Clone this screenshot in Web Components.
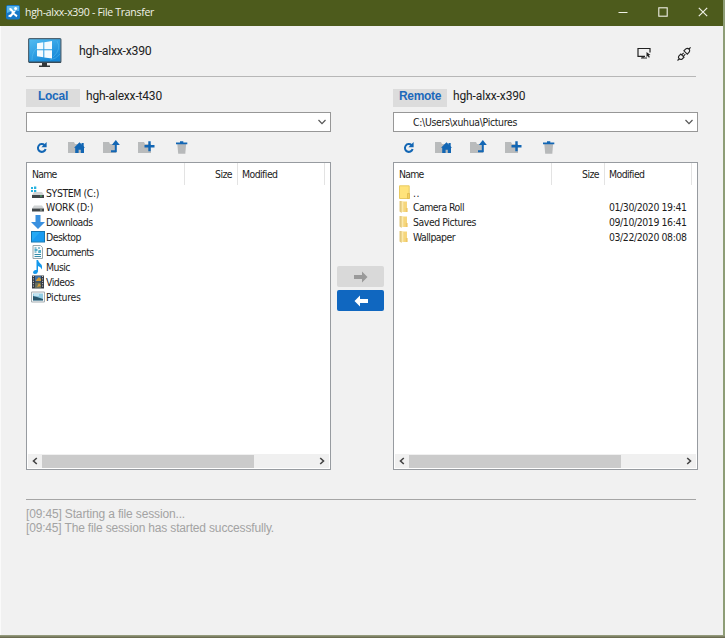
<!DOCTYPE html>
<html lang="en"><head><meta charset="utf-8"><title>File Transfer</title>
<style>html,body{margin:0;width:725px;height:638px;overflow:hidden}body{background:#8c9672;font-family:"Liberation Sans",Arial,sans-serif}</style></head>
<body><transfer-window></transfer-window>
<script>
const define=(name,cls)=>customElements.define(name,cls);
const icons={
app:[14,15,`<rect width="14" height="14.5" rx="2" fill="#1478c8"/><path d="M1 1h12v5Q7 5 1 8z" fill="#58b4ea"/><path d="M3.3 3.2q2-1 3.2 1.6l1 1.2 2.6-.4L8.3 8l3.2 2.2-1 2-3.2-2.6-2.4 2.6-2.7-.7.4-1.3L5.2 9l.6-2.2L3.5 5z" fill="#fff"/><circle cx="9.6" cy="3.6" r="1.5" fill="#fff"/>`],
min:[10,10,`<path d="M.5 5.5h9" stroke="#eff0e5"/>`],
max:[10,10,`<rect x=".8" y=".8" width="8.4" height="8.4" fill="none" stroke="#eff0e5" stroke-width="1.1"/>`],
close:[10,10,`<path d="M.8.8l8.4 8.4M9.2.8L.8 9.2" stroke="#eff0e5" stroke-width="1.2"/>`],
monitor:[34,30,`<defs><linearGradient id="g" x2=".6" y2="1"><stop stop-color="#54bdf2"/><stop offset="1" stop-color="#1588d8"/></linearGradient></defs><rect x=".6" y=".6" width="32.3" height="23.8" rx="1" fill="url(#g)" stroke="#4e6371" stroke-width="1.2"/><path d="M4 22q0-8 5-12M29 3q5 8-4 16M22 22q6-1 10-6" fill="none" stroke="#67c7f5" opacity=".4"/><path d="M9 5.3l6.3-1v7H9zM16.3 4.2L24 3v8.3h-7.7zM9 12.3h6.3v7L9 18.2zM16.3 12.3H24v8.2l-7.7-1.1z" fill="#f4fbff"/><path d="M14 25h5v2.5h3V29H11v-1.5h3z" fill="#34383a"/><path d="M1 24.2h32" stroke="#30424d"/>`],
screen:[14,12,`<path d="M8 9.3H1V1.5h12v4M6 9v2M4 11h6" fill="none" stroke="#222" stroke-width="1.2"/><path d="M9.5 5l4 3-1.800.3 1.2 1.8-1 .7-1.200-1.900-1.200 1z" fill="#222"/>`],
plug:[14,14,`<g fill="none" stroke="#222" stroke-width="1.1"><path d="M2 8.800l1.800-1.800 3.200 3.200L5.200 12Q3.600 13 2.200 11.700T2 8.800zM8.800 1.900Q10.500.8 11.900 2t.2 3.200L10.300 7.100 6.900 3.800zM.5 13.500L2.200 12M12 2L13.600.4M4.700 7.900l2-2.100M6.300 9.300l2-2.100"/></g>`],
refresh:[12,13,`<path d="M8.600 4.200A3.900 3.900 0 1 0 9.600 8" fill="none" stroke="#1266b4" stroke-width="2"/><path d="M10.600 1v5.200H5.400z" fill="#1266b4"/>`],
home:[18,13,`<path d="M0 1h6l1 2h6v9H0z" fill="#b9bbbc"/><path d="M11.500 1.200L17 6.800h-1V12h-3.200V8.800h-2.200V12H7.200V6.800H6z" fill="#1266b4"/><path d="M13.500 2h2.200v4h-2.200z" fill="#1266b4"/>`],
up:[18,14,`<path d="M0 2h6l1 2h6v9H0z" fill="#b9bbbc"/><path d="M8 11.200h4.800V4" fill="none" stroke="#1266b4" stroke-width="2"/><path d="M8.800 5L12.800 0l4 5z" fill="#1266b4"/>`],
add:[18,13,`<path d="M0 1h6l1 2h6v9H0z" fill="#b9bbbc"/><path d="M6.500 5.300h10M11.500.3v10" stroke="#1266b4" stroke-width="2.400"/>`],
trash:[12,13,`<path d="M1.300 3h8.800l-.8 9.700H2.200z" fill="#b7b9ba"/><path d="M0 1.400h4V.3h3.300v1.100h4v1.800H0z" fill="#1266b4"/>`],
chev:[8,6,`<path d="M.5 1L4 4.600 7.500 1" fill="none" stroke="#555" stroke-width="1.2"/>`],
sl:[6,8,`<path d="M4.800 1L1.500 4l3.300 3" fill="none" stroke="#444" stroke-width="1.6"/>`],
sr:[6,8,`<path d="M1.200 1l3.300 3-3.300 3" fill="none" stroke="#444" stroke-width="1.6"/>`],
right:[14,12,`<path d="M0 4h8V.5L13.500 6 8 11.500V8H0z" fill="#9a9a9a"/>`],
left:[14,12,`<path d="M14 4H6V.5L.5 6 6 11.500V8h8z" fill="#fff"/>`],
sys:[14,14,`<path d="M0 1h2v2H0zM3 .6h2.300V3H3zM0 4h2v2H0zM3 4h2.300v2.300H3z" fill="#27b3df"/><path d="M3 6h8l2 3H1z" fill="#d0d3d4"/><path d="M1 9h12v3H1z" fill="#414648"/><path d="M9 10h2" stroke="#50bd70"/>`],
drive:[14,14,`<path d="M3 5.500h8l2 3H1z" fill="#d0d3d4"/><path d="M1 8.500h12v3H1z" fill="#414648"/><path d="M9 10h2" stroke="#a4b6aa"/>`],
down:[14,14,`<path d="M4.500 0h5v7H14l-7 7-7-7h4.500z" fill="#3990df"/>`],
desk:[14,14,`<rect x=".5" y="1.5" width="13" height="10.5" fill="#24a9f4" stroke="#1474b1"/><path d="M1 11l8-9h4v9z" fill="#199af0"/>`],
doc:[14,14,`<path d="M2 .5h7.500l2 2v11H2z" fill="#f7fafb" stroke="#9aa7ac"/><path d="M3.500 3h2M7 3h2M3.500 7h2M7 7h3M3.500 9.500h6.500M3.500 11.500h6.500" stroke="#328aa8"/><path d="M3.500 4h3v2h-3zM7.500 5h2.500v3H7.500z" fill="#52aeca"/>`],
music:[14,14,`<path d="M5.500 0H7q.7 2.600 2.700 4t1 5.500Q10 6.500 7 6v5.500Q6.500 14 4 14q-2.500-.2-1.800-2.300T5.500 10z" fill="#1498eb"/>`],
video:[14,14,`<path d="M1 .5h12v13H1z" fill="#343a43"/><path d="M4 1h6v5.500H4z" fill="#3d70a5"/><path d="M4 7.500h6V13H4z" fill="#68705d"/><path d="M5 5l3-3 2 2v2H5zM6 12l2-4 2 3z" fill="#d29a38"/><path d="M2.400 1v12M11.600 1v12" stroke="#ddd" stroke-dasharray="1 1.4"/>`],
pic:[14,14,`<path d="M.5 2h13v10H.5z" fill="#f6f9fa" stroke="#a4adb2"/><path d="M2 3.500h10v7H2z" fill="#92cce4"/><path d="M2 6l4 1 6 2v1.500H2z" fill="#27576e"/><path d="M3 5h5" stroke="#f0faff"/>`],
folder:[14,14,`<path d="M3 1.500h6V12H3z" fill="#f6d67c"/><path d="M1.500 1h2.200v12l-2.200-1.500z" fill="#e3c97f"/><path d="M3.700 1.500h1.600V12H3.700z" fill="#fbe9ae"/><path d="M7.800 8h1.800v4H7.800z" fill="#eec765"/>`],
parent:[14,15,`<path d="M1.500 .8h9.700v12.700H1.500z" fill="#ffe37b" stroke="#e8ca63"/><path d="M9.500 8.500h2v5h-2z" fill="#f4cf5e" stroke="#ddb74b" stroke-width=".7"/>`]
};
define('ui-icon',class extends HTMLElement{connectedCallback(){const [w,h,p]=icons[this.getAttribute('name')];this.attachShadow({mode:'open'}).innerHTML=`<style>:host{display:block;flex:none;width:${w}px;height:${h}px}svg{display:block}</style><svg width="${w}" height="${h}" viewBox="0 0 ${w} ${h}">${p}</svg>`}});
/* One-line label whose tracking is tuned so the text spans the width in "w". */
define('ui-text',class extends HTMLElement{connectedCallback(){
 const t=this.getAttribute('t');
 this.attachShadow({mode:'open'}).innerHTML=`<style>:host{display:block;flex:none;white-space:pre}span{display:inline-block}</style><span>${t}</span>`;
 const s=this.shadowRoot.querySelector('span'),w=+this.getAttribute('w');
 if(w){const n=s.getBoundingClientRect().width;if(n)s.style.letterSpacing=((w-n)/t.length)+'px'}
}});
define('transfer-button',class extends HTMLElement{connectedCallback(){const p=this.hasAttribute('primary');this.attachShadow({mode:'open'}).innerHTML=`<style>:host{display:flex;align-items:center;justify-content:center;width:47px;height:21px;border-radius:2px;background:${p?'#1067c0':'#d9d9d9'}}</style><slot></slot>`}});
define('file-row',class extends HTMLElement{connectedCallback(){const g=k=>this.getAttribute(k);this.attachShadow({mode:'open'}).innerHTML=`<style>:host{display:flex;height:14.9px;align-items:center;box-sizing:border-box;padding-left:4px}.n{margin-left:1px;flex:1}.d{width:88px}</style><ui-icon name="${g('icon')}"></ui-icon><div class="n"><ui-text t="${g('name')}" w="${g('w')}"></ui-text></div>${g('date')?`<div class="d"><ui-text t="${g('date')}" w="77.5"></ui-text></div>`:''}`}});
define('file-list',class extends HTMLElement{connectedCallback(){this.attachShadow({mode:'open'}).innerHTML=`<style>
:host{display:flex;flex-direction:column;box-sizing:border-box;width:305px;height:308px;border:1px solid #979ba0;background:#fff;font:10.4px "DejaVu Sans Condensed","DejaVu Sans",sans-serif;font-stretch:condensed;color:#1c1c1c}
.h{display:grid;grid-template-columns:158px 53px 87px;height:22px;align-items:stretch}.h div{box-sizing:border-box;display:flex;align-items:center;border-right:1px solid #e3e3e3;padding:0 5px 1px}.h div:last-child{padding-left:4px}.s{justify-content:flex-end}
.rows{flex:1;display:flex;flex-direction:column;box-sizing:border-box;padding-top:.1px}
.bar{display:flex;height:14px;align-items:center;background:#f0f0f0;margin:0 1px 1px;padding:0 4px;justify-content:space-between}.track{width:270px;height:13px;margin-right:3px}.thumb{width:212px;height:13px;background:#cbcbcb}</style>
<div class="h"><div><ui-text t="Name" w="24.5"></ui-text></div><div class="s"><ui-text t="Size" w="17"></ui-text></div><div><ui-text t="Modified" w="35.5"></ui-text></div></div><div class="rows"><slot></slot></div><div class="bar"><ui-icon name="sl"></ui-icon><div class="track"><div class="thumb"></div></div><ui-icon name="sr"></ui-icon></div>`}});
define('file-panel',class extends HTMLElement{connectedCallback(){const g=k=>this.getAttribute(k);this.attachShadow({mode:'open'}).innerHTML=`<style>
:host{display:block;flex:none;width:305px}.head{display:flex;height:18px;gap:6px}.tab{width:54px;height:18px;background:#dcdcdc;display:flex;justify-content:center;font:bold 12px/15px "Liberation Sans",Arial,sans-serif;color:#1c69bb}.host{font:12px/15px Roboto,sans-serif;color:#222}
.combo{display:flex;justify-content:space-between;align-items:center;box-sizing:border-box;height:20px;margin-top:5px;border:1px solid #979797;background:#fff;padding:0 4px 0 19px;font:10.4px "DejaVu Sans Condensed","DejaVu Sans",sans-serif;font-stretch:condensed;color:#1c1c1c}
.tools{display:flex;height:30px;align-items:center;padding-left:9.5px;box-sizing:border-box}</style>
<div class="head"><div class="tab"><ui-text t="${g('label')}" w="${g('lw')}"></ui-text></div><div class="host"><ui-text t="${g('host')}" w="${g('hw')}"></ui-text></div></div>
<div class="combo"><div>${g('path')?`<ui-text t="${g('path')}" w="104"></ui-text>`:''}</div><ui-icon name="chev"></ui-icon></div>
<div class="tools"><ui-icon name="refresh"></ui-icon><ui-icon name="home" style="margin-left:20px"></ui-icon><ui-icon name="up" style="margin-left:17px"></ui-icon><ui-icon name="add" style="margin-left:17px"></ui-icon><ui-icon name="trash" style="margin-left:20px"></ui-icon></div>
<file-list><slot></slot></file-list>`}});
define('title-bar',class extends HTMLElement{connectedCallback(){this.attachShadow({mode:'open'}).innerHTML=`<style>:host{display:flex;align-items:center;height:26px;box-sizing:border-box;padding:0 15px 2px 6px;background:#4d5b1c;color:#f1f2e8;font:10.5px "Open Sans",sans-serif}.c{display:flex;gap:30px;margin-left:auto}ui-text{margin-left:5px}</style><ui-icon name="app"></ui-icon><ui-text t="hgh-alxx-x390 - File Transfer" w="129"></ui-text><div class="c"><ui-icon name="min"></ui-icon><ui-icon name="max"></ui-icon><ui-icon name="close"></ui-icon></div>`}});
define('transfer-window',class extends HTMLElement{connectedCallback(){this.attachShadow({mode:'open'}).innerHTML=`<style>
:host{display:block;width:725px;height:638px;box-sizing:border-box;padding:0 2px 3px 0;background:linear-gradient(#9da487,#626247) bottom/100% 3px no-repeat,#8e9d76}
main{box-sizing:border-box;height:609px;background:#f1f1f1;padding:0 26px;border-left:1px solid #fafafa;padding-left:25px}
.top{display:flex;height:50px;align-items:center;padding:0 6px 0 2px;box-sizing:border-box}.name{font:12.3px Roboto,sans-serif;color:#222;margin-left:17px;margin-top:0}.acts{display:flex;gap:26px;margin-left:auto;margin-top:5px}
.line{height:1px;width:670px;background:#b7b7b7}
.panels{display:flex;margin-top:12px;width:672px}.mid{flex:none;box-sizing:border-box;width:62px;display:flex;flex-direction:column;align-items:flex-start;padding-left:6px;gap:3px;padding-top:177px}
.log{margin-top:7px;color:#a3a3a3;font:12px/14px "Liberation Sans",Arial,sans-serif}</style>
<title-bar></title-bar><main><div class="top"><ui-icon name="monitor" style="margin-top:3px"></ui-icon><div class="name"><ui-text t="hgh-alxx-x390" w="72.5"></ui-text></div><div class="acts"><ui-icon name="screen"></ui-icon><ui-icon name="plug"></ui-icon></div></div><div class="line"></div>
<div class="panels"><file-panel label="Local" lw="30" host="hgh-alexx-t430" hw="76">
<file-row icon="sys" name="SYSTEM (C:)" w="53"></file-row><file-row icon="drive" name="WORK (D:)" w="47"></file-row><file-row icon="down" name="Downloads" w="46.5"></file-row><file-row icon="desk" name="Desktop" w="35"></file-row><file-row icon="doc" name="Documents" w="47.5"></file-row><file-row icon="music" name="Music" w="24"></file-row><file-row icon="video" name="Videos" w="28"></file-row><file-row icon="pic" name="Pictures" w="34.5"></file-row></file-panel>
<div class="mid"><transfer-button><ui-icon name="right"></ui-icon></transfer-button><transfer-button primary><ui-icon name="left"></ui-icon></transfer-button></div>
<file-panel label="Remote" lw="42" host="hgh-alxx-x390" hw="72.5" path="C:\\Users\\xuhua\\Pictures">
<file-row icon="parent" name=".." w="7"></file-row><file-row icon="folder" name="Camera Roll" w="51" date="01/30/2020 19:41"></file-row><file-row icon="folder" name="Saved Pictures" w="63" date="09/10/2019 16:41"></file-row><file-row icon="folder" name="Wallpaper" w="42" date="03/22/2020 08:08"></file-row></file-panel></div>
<div class="line" style="margin-top:29px;background:#a5a5a5"></div><div class="log"><ui-text t="[09:45] Starting a file session..." w="159"></ui-text><ui-text t="[09:45] The file session has started successfully." w="248"></ui-text></div></main>`}});
</script></body></html>
